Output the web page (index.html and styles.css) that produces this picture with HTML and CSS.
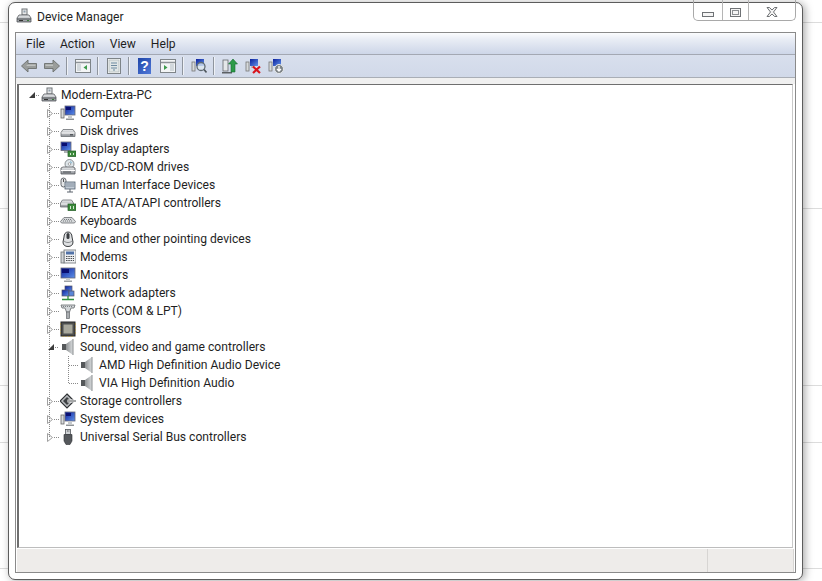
FILE: index.html
```html
<!DOCTYPE html>
<html lang="en">
<head>
<meta charset="utf-8">
<title>Device Manager</title>
<link rel="stylesheet" href="styles.css">
</head>
<body>
<svg class="sprites" width="0" height="0" aria-hidden="true">
  <defs>
    <linearGradient id="gm" x1="0" y1="0" x2="0" y2="1"><stop offset="0" stop-color="#eceef0"/><stop offset="1" stop-color="#8d9196"/></linearGradient>
    <linearGradient id="gb" x1="0" y1="0" x2="1" y2="1"><stop offset="0" stop-color="#0b1f9c"/><stop offset="1" stop-color="#5f92ea"/></linearGradient>
    <linearGradient id="gs" x1="0" y1="0" x2="1" y2="0"><stop offset="0" stop-color="#6d7072"/><stop offset="1" stop-color="#d9dcde"/></linearGradient>
    <symbol id="pc" viewBox="0 0 16 16">
      <rect x="6" y="1" width="5" height="6" fill="#e8e8e8" stroke="#6f7478"/><rect x="7.5" y="2.5" width="2" height="2" fill="#8fa0ae"/>
      <path d="M1 10 3 7h10l2 3v4H1z" fill="url(#gm)" stroke="#55595d" stroke-width=".8"/><path d="M1 11h14" stroke="#44484c"/><rect x="3" y="12" width="4" height="1" fill="#333"/><rect x="11" y="12" width="2" height="1" fill="#3b7a3b"/>
    </symbol>
    <symbol id="computer" viewBox="0 0 16 16">
      <rect x="1" y="4" width="3" height="9" fill="#d7dadc" stroke="#666" stroke-width=".8"/>
      <rect x="5" y="1" width="10" height="9" fill="url(#gb)" stroke="#667" stroke-width=".8"/><path d="M6 2h5v3H6z" fill="#0a0f72"/>
      <path d="M8 10h4v3H8z" fill="#c7cacc"/><path d="M6 13.500h8v1.500H6z" fill="#8e9295"/>
    </symbol>
    <symbol id="disk" viewBox="0 0 16 16">
      <path d="M1 9.500 3 6.500h10l2 3v4H1z" fill="url(#gm)" stroke="#6c7074" stroke-width=".8"/><path d="M1.500 10h13" stroke="#fff"/><rect x="10" y="11" width="3" height="1.500" fill="#55595d"/>
    </symbol>
    <symbol id="display" viewBox="0 0 16 16">
      <rect x="1" y="1" width="10" height="8.500" fill="url(#gb)" stroke="#667" stroke-width=".8"/><path d="M2 2h5v3H2z" fill="#0a0f72"/>
      <path d="M4 10h5v2H4z" fill="#aeb2b5"/><rect x="8" y="10" width="8" height="5.500" fill="#3d8a3d" stroke="#1f5a22" stroke-width=".7"/><path d="M10 12h1v2h-1zm3 0h1v2h-1z" fill="#d2e8d0"/>
    </symbol>
    <symbol id="dvd" viewBox="0 0 16 16">
      <circle cx="9.500" cy="5" r="4.500" fill="#dfe6ea" stroke="#70767a" stroke-width=".8"/><circle cx="9.500" cy="5" r="1.300" fill="#fff" stroke="#777" stroke-width=".6"/><path d="M10 1.500 12.500 4l-2 .5z" fill="#8fbcd4"/>
      <path d="M1 9 3 8h10l2 1v6H1z" fill="url(#gm)" stroke="#55595d" stroke-width=".8"/><path d="M1 11.500h14" stroke="#fff"/><rect x="3" y="12.500" width="8" height="1" fill="#4d5154"/>
    </symbol>
    <symbol id="hid" viewBox="0 0 16 16">
      <rect x="1" y="1" width="5" height="9" rx="2.500" fill="#e4e6e8" stroke="#55595d" stroke-width=".9"/><path d="M3.500 2v3" stroke="#555"/>
      <rect x="5" y="5" width="10" height="7" fill="#c3ccd6" stroke="#50606e" stroke-width=".8"/><path d="M6.500 7h7M6.500 9h7" stroke="#405364" stroke-dasharray="1 1"/><path d="M10 12v3M7 15h6" stroke="#58616b"/>
    </symbol>
    <symbol id="ide" viewBox="0 0 16 16">
      <path d="M0.500 8 2.500 5h9l2 3v4H.5z" fill="url(#gm)" stroke="#6c7074" stroke-width=".8"/><path d="M1 9h12" stroke="#fff"/>
      <rect x="8" y="9" width="8" height="6.500" fill="#3d8a3d" stroke="#1f5a22" stroke-width=".7"/><path d="M10 11h1v3h-1zm3 0h1v3h-1z" fill="#d2e8d0"/>
    </symbol>
    <symbol id="keyboard" viewBox="0 0 16 16">
      <path d="M.5 8.500 4 4.500h8l3.500 4-1 1.500H1.500z" fill="#d5d8da" stroke="#6c7074" stroke-width=".8"/><path d="M4 6.500h8M3 8h10" stroke="#777b7f" stroke-dasharray="1 1"/>
    </symbol>
    <symbol id="mouse" viewBox="0 0 16 16">
      <path d="M4 6c0-3 1.500-5 4-5s4 2 4 5l1 5c0 3-2 4.500-5 4.500S3 14 3 11z" fill="#dfe1e3" stroke="#3a3d40"/><rect x="6.500" y="2" width="3" height="6" rx="1.500" fill="#3a3d40"/><path d="M4 10c2 2 6 2 8 0" stroke="#8a8d90" fill="none"/>
    </symbol>
    <symbol id="modem" viewBox="0 0 16 16">
      <rect x="4" y="1" width="12" height="13" fill="#eef0f2" stroke="#6d7276" stroke-width=".8"/><rect x="1" y="3" width="3" height="11" fill="#d1d4d6" stroke="#6d7276" stroke-width=".8"/>
      <rect x="6" y="2.500" width="8" height="3" fill="#5172a8"/><path d="M6 7.500h8M6 9.500h8M6 11.500h8" stroke="#4a4e52" stroke-dasharray="1.500 .8"/>
    </symbol>
    <symbol id="monitor" viewBox="0 0 16 16">
      <rect x="1" y="1" width="14" height="10" fill="url(#gb)" stroke="#667" stroke-width=".8"/><path d="M2 2h7v4H2z" fill="#0a0f72"/>
      <path d="M6 11h4v2H6z" fill="#c7cacc"/><path d="M4 13.500h8V15H4z" fill="#9ea2a5"/>
    </symbol>
    <symbol id="network" viewBox="0 0 16 16">
      <rect x="5" y="1" width="7" height="6" fill="url(#gb)" stroke="#556" stroke-width=".7"/><rect x="2" y="5" width="7" height="6" fill="url(#gb)" stroke="#556" stroke-width=".7"/><rect x="9" y="6" width="5" height="5" fill="#5a86d8" stroke="#556" stroke-width=".7"/>
      <path d="M8 11v3M2 14.500h12" stroke="#2f8f3f" stroke-width="1.300"/>
    </symbol>
    <symbol id="ports" viewBox="0 0 16 16">
      <path d="M1 2h14l-1 3h-3L9.500 9h-3L5 5H2z" fill="#d2d6d9" stroke="#686c70" stroke-width=".8"/><path d="M3 3.500h10" stroke="#7e8286" stroke-dasharray="1 1"/>
      <rect x="6.500" y="9" width="3" height="6.500" fill="#a9adb0" stroke="#62666a" stroke-width=".7"/>
    </symbol>
    <symbol id="cpu" viewBox="0 0 16 16">
      <rect x="1" y="1" width="14" height="14" fill="#4e5050" stroke="#262626"/><rect x="3.500" y="3.500" width="9" height="9" fill="#a8a89c"/>
      <path d="M0 3h1M0 6h1M0 9h1M0 12h1M15 3h1M15 6h1M15 9h1M15 12h1M3 15v1M6 15v1M9 15v1M12 15v1" stroke="#b8942e"/>
    </symbol>
    <symbol id="sound" viewBox="0 0 16 16">
      <path d="M13 0 6 5H3v6h3l7 5z" fill="url(#gs)"/><path d="M2 5h4v6H2z" fill="#55585a"/><path d="M13 0v16" stroke="#8a8e90"/>
    </symbol>
    <symbol id="storage" viewBox="0 0 16 16">
      <path d="M7 1 14 8l-7 7-7-7z" fill="#b9bcbf" stroke="#2f3235" stroke-width="1.200"/><path d="M7 4 11 8l-4 4-4-4z" fill="#3e4144"/><path d="M7.500 6.500H16v3H7.500z" fill="#fff"/><path d="M8 8h8" stroke="#4b4e51"/>
    </symbol>
    <symbol id="usb" viewBox="0 0 16 16">
      <rect x="5.500" y="0.500" width="5" height="5" fill="#d0d3d6" stroke="#54585c" stroke-width=".8"/><path d="M7 2h.8M8.500 2h.8" stroke="#3c3f42"/>
      <path d="M4 5.500h8V12l-2 3.500H6L4 12z" fill="#55585c" stroke="#303336" stroke-width=".6"/>
    </symbol>
    <symbol id="tb-back" viewBox="0 0 16 16"><path d="M.5 8 7 2v3.500h8.500v5H7V14z" fill="#9a9d9b" stroke="#6c706e" stroke-width=".9"/><path d="M7 6.500h7.500v1.500H5z" fill="#bfc2c0"/></symbol>
    <symbol id="tb-forward" viewBox="0 0 16 16"><path d="M15.500 8 9 2v3.500H.5v5H9V14z" fill="#9a9d9b" stroke="#6c706e" stroke-width=".9"/><path d="M1.500 6.500H9V8H1.500z" fill="#bfc2c0"/></symbol>
    <symbol id="tb-pane" viewBox="0 0 16 16"><rect x=".5" y="1.500" width="15" height="13" fill="#f3f5f6" stroke="#7e8488"/><path d="M1 4.500h14" stroke="#8d9397" stroke-width="1.500"/><rect x="2" y="6" width="4" height="7" fill="#d2d8dc"/><path d="M12 7v5L8.500 9.500z" fill="#3d9a4b"/></symbol>
    <symbol id="tb-props" viewBox="0 0 16 16"><rect x="1.500" y=".5" width="13" height="15" fill="#f7f8f8" stroke="#7e8488"/><rect x="3" y="2" width="10" height="12" fill="#e0e6e6" stroke="#a6aeb0" stroke-width=".6"/><path d="M5 5h6M5 7.500h6M5 10h6M7 12h2" stroke="#6d8aa0"/></symbol>
    <symbol id="tb-view" viewBox="0 0 16 16"><rect x=".5" y="1.500" width="15" height="13" fill="#f3f5f6" stroke="#7e8488"/><path d="M1 4.500h14" stroke="#8d9397" stroke-width="1.500"/><rect x="10" y="6" width="4" height="7" fill="#d2d8dc"/><path d="M4 7v5l3.500-2.500z" fill="#3d9a4b"/></symbol>
    <symbol id="tb-scan" viewBox="0 0 16 16"><rect x="1" y="4" width="3" height="9" fill="#d7dadc" stroke="#777" stroke-width=".8"/><rect x="5" y="1" width="8" height="7" fill="url(#gb)"/><circle cx="10" cy="8.500" r="4" fill="#dfeaf0" fill-opacity=".7" stroke="#5f6a72" stroke-width="1.300"/><path d="m13 11.500 2.500 3" stroke="#4e565c" stroke-width="1.600"/></symbol>
    <symbol id="tb-update" viewBox="0 0 16 16"><rect x="1" y="2" width="5" height="11" fill="#e4e7e9" stroke="#666a6e" stroke-width=".8"/><path d="M0 14h10v1.500H0z" fill="#5c6064"/><path d="M11 1 15.500 6H13v8H9V6H6.500z" fill="#2c9a48" stroke="#1a6b30" stroke-width=".6"/></symbol>
    <symbol id="tb-remove" viewBox="0 0 16 16"><rect x="1" y="4" width="3" height="9" fill="#d7dadc" stroke="#777" stroke-width=".8"/><rect x="5" y="1" width="8" height="7" fill="url(#gb)"/><path d="M6 8h3v2H6z" fill="#b8bcbf"/><path d="m8 8.500 7 6.500m0-6.500L8 15" stroke="#d8141c" stroke-width="2.200"/></symbol>
    <symbol id="tb-add" viewBox="0 0 16 16"><rect x="1" y="4" width="3" height="9" fill="#d7dadc" stroke="#777" stroke-width=".8"/><rect x="5" y="1" width="8" height="7" fill="url(#gb)"/><circle cx="11" cy="11" r="4.500" fill="#7d8387" stroke="#e8eaec"/><path d="M11 8v5m-2-2 2 2 2-2" stroke="#fff" stroke-width="1.300" fill="none"/></symbol>
    <symbol id="exp-closed" viewBox="0 0 19 18"><path d="M6.500 5.500v8l5-4z" fill="#fff" stroke="#a0a0a0"/><path d="M13 9.500h5" stroke="#8a8a8a" stroke-dasharray="1 1"/></symbol>
    <symbol id="exp-open" viewBox="0 0 19 18"><path d="M7 12h6V6z" fill="#3c3c3c"/><path d="M14 9.500h4" stroke="#8a8a8a" stroke-dasharray="1 1"/></symbol>
    <symbol id="leaf-link" viewBox="0 0 19 18"><path d="M9 9.500h10" stroke="#8a8a8a" stroke-dasharray="1 1"/></symbol>
  </defs>
</svg>

<main class="window">
  <header class="titlebar">
    <svg class="icon title-icon"><use href="#pc"/></svg>
    <span class="title-text">Device Manager</span>
    <div class="caption">
      <span class="cap cap-min"><i class="glyph-min"></i></span>
      <span class="cap cap-max"><i class="glyph-max"></i></span>
      <span class="cap cap-close">
        <svg class="glyph-close" viewBox="0 0 12 10"><path d="M1 .5h2.500L6 3 8.500.5H11L7.500 5 11 9.500H8.500L6 7 3.500 9.500H1L4.500 5z" fill="#f2f2f2" stroke="#6f7275"/></svg>
      </span>
    </div>
  </header>

  <div class="frame">
    <nav class="menubar">
      <span class="menu-item menu-file">File</span>
      <span class="menu-item menu-action">Action</span>
      <span class="menu-item menu-view">View</span>
      <span class="menu-item menu-help">Help</span>
    </nav>

    <div class="toolbar">
      <svg class="icon"><use href="#tb-back"/></svg>
      <svg class="icon gap-7"><use href="#tb-forward"/></svg>
      <i class="sep"></i>
      <svg class="icon"><use href="#tb-pane"/></svg>
      <i class="sep"></i>
      <svg class="icon"><use href="#tb-props"/></svg>
      <i class="sep"></i>
      <span class="help-btn">?</span>
      <svg class="icon gap-9"><use href="#tb-view"/></svg>
      <i class="sep"></i>
      <svg class="icon"><use href="#tb-scan"/></svg>
      <i class="sep"></i>
      <svg class="icon"><use href="#tb-update"/></svg>
      <svg class="icon gap-7"><use href="#tb-remove"/></svg>
      <svg class="icon gap-7"><use href="#tb-add"/></svg>
    </div>

    <div class="strip"></div>

    <section class="tree">
      <div class="row">
        <svg class="exp"><use href="#exp-open"/></svg>
        <svg class="icon"><use href="#pc"/></svg>
        <span class="label">Modern-Extra-PC</span>
      </div>
      <ul class="branch">
        <li><div class="row"><svg class="exp"><use href="#exp-closed"/></svg><svg class="icon"><use href="#computer"/></svg><span class="label">Computer</span></div></li>
        <li><div class="row"><svg class="exp"><use href="#exp-closed"/></svg><svg class="icon"><use href="#disk"/></svg><span class="label">Disk drives</span></div></li>
        <li><div class="row"><svg class="exp"><use href="#exp-closed"/></svg><svg class="icon"><use href="#display"/></svg><span class="label">Display adapters</span></div></li>
        <li><div class="row"><svg class="exp"><use href="#exp-closed"/></svg><svg class="icon"><use href="#dvd"/></svg><span class="label">DVD/CD-ROM drives</span></div></li>
        <li><div class="row"><svg class="exp"><use href="#exp-closed"/></svg><svg class="icon"><use href="#hid"/></svg><span class="label">Human Interface Devices</span></div></li>
        <li><div class="row"><svg class="exp"><use href="#exp-closed"/></svg><svg class="icon"><use href="#ide"/></svg><span class="label">IDE ATA/ATAPI controllers</span></div></li>
        <li><div class="row"><svg class="exp"><use href="#exp-closed"/></svg><svg class="icon"><use href="#keyboard"/></svg><span class="label">Keyboards</span></div></li>
        <li><div class="row"><svg class="exp"><use href="#exp-closed"/></svg><svg class="icon"><use href="#mouse"/></svg><span class="label">Mice and other pointing devices</span></div></li>
        <li><div class="row"><svg class="exp"><use href="#exp-closed"/></svg><svg class="icon"><use href="#modem"/></svg><span class="label">Modems</span></div></li>
        <li><div class="row"><svg class="exp"><use href="#exp-closed"/></svg><svg class="icon"><use href="#monitor"/></svg><span class="label">Monitors</span></div></li>
        <li><div class="row"><svg class="exp"><use href="#exp-closed"/></svg><svg class="icon"><use href="#network"/></svg><span class="label">Network adapters</span></div></li>
        <li><div class="row"><svg class="exp"><use href="#exp-closed"/></svg><svg class="icon"><use href="#ports"/></svg><span class="label">Ports (COM &amp; LPT)</span></div></li>
        <li><div class="row"><svg class="exp"><use href="#exp-closed"/></svg><svg class="icon"><use href="#cpu"/></svg><span class="label">Processors</span></div></li>
        <li>
          <div class="row"><svg class="exp"><use href="#exp-open"/></svg><svg class="icon"><use href="#sound"/></svg><span class="label">Sound, video and game controllers</span></div>
          <ul class="branch sub">
            <li><div class="row"><svg class="exp"><use href="#leaf-link"/></svg><svg class="icon"><use href="#sound"/></svg><span class="label">AMD High Definition Audio Device</span></div></li>
            <li><div class="row"><svg class="exp"><use href="#leaf-link"/></svg><svg class="icon"><use href="#sound"/></svg><span class="label">VIA High Definition Audio</span></div></li>
          </ul>
        </li>
        <li><div class="row"><svg class="exp"><use href="#exp-closed"/></svg><svg class="icon"><use href="#storage"/></svg><span class="label">Storage controllers</span></div></li>
        <li><div class="row"><svg class="exp"><use href="#exp-closed"/></svg><svg class="icon"><use href="#computer"/></svg><span class="label">System devices</span></div></li>
        <li><div class="row"><svg class="exp"><use href="#exp-closed"/></svg><svg class="icon"><use href="#usb"/></svg><span class="label">Universal Serial Bus controllers</span></div></li>
      </ul>
    </section>

    <footer class="statusbar">
      <span class="status-main"></span>
      <span class="status-side"></span>
    </footer>
  </div>
</main>
</body>
</html>
```

FILE: styles.css
```css
* { box-sizing: border-box; }

html, body { margin: 0; height: 100%; }

body {
  width: 822px;
  height: 581px;
  overflow: hidden;
  position: relative;
  font-family: Roboto, "Noto Sans", sans-serif;
  font-size: 12.1px;
  color: #1f1f1f;
  background-color: #fff;
  background-image:
    linear-gradient(#dcdcdc, #dcdcdc),
    linear-gradient(#dcdcdc, #dcdcdc),
    linear-gradient(#dcdcdc, #dcdcdc),
    linear-gradient(#dcdcdc, #dcdcdc),
    linear-gradient(#dcdcdc, #dcdcdc);
  background-size: 100% 1px;
  background-repeat: no-repeat;
  background-position: 0 22px, 0 208px, 0 385px, 0 442px, 0 568px;
}

.sprites { position: absolute; }

.window {
  position: absolute;
  left: 8px;
  top: 2px;
  width: 795px;
  height: 578px;
  padding: 0 6px;
  display: flex;
  flex-direction: column;
  background: #fff;
  border: 1px solid #5c5c5c;
  border-radius: 7px;
  box-shadow: 2px 1px 9px rgba(0, 0, 0, .35);
}

.icon { width: 16px; height: 16px; flex: none; display: block; }

.titlebar {
  height: 29px;
  flex: none;
  display: flex;
  align-items: flex-start;
}

.title-icon { margin: 5px 0 0 1px; }

.title-text {
  margin: 4px 0 0 5px;
  line-height: 20px;
}

.caption {
  margin: -3px 0 0 auto;
  height: 21px;
  display: flex;
  border: 1px solid #a9a9a9;
  border-top: 0;
  border-radius: 0 0 5px 5px;
}

.cap {
  display: flex;
  justify-content: center;
  height: 100%;
  border-left: 1px solid #b5b5b5;
}
.cap:first-child { border-left: 0; }
.cap-min { width: 28px; }
.cap-max { width: 26px; }
.cap-close { width: 47px; }

.glyph-min {
  display: block;
  width: 12px;
  height: 5px;
  margin-top: 12px;
  background: #f5f5f5;
  border: 1px solid #6f7275;
}
.glyph-max {
  display: block;
  width: 11px;
  height: 9px;
  margin-top: 8px;
  background: #f5f5f5;
  border: 1px solid #6f7275;
  box-shadow: inset 0 0 0 1px #f5f5f5, inset 0 0 0 2px #8b8e91;
}
.glyph-close { width: 12px; height: 10px; margin-top: 7px; }

.frame {
  flex: none;
  height: 541px;
  display: flex;
  flex-direction: column;
  border: 1px solid #8a8a8a;
  background: #fff;
}

.menubar {
  height: 22px;
  flex: none;
  display: flex;
  align-items: center;
  background: linear-gradient(#fbfcfe, #e9edf5 30%, #cdd6e8);
  border-bottom: 1px solid #a3a8b3;
}
.menu-item { line-height: 20px; }
.menu-file { margin-left: 10px; }
.menu-action { margin-left: 15px; }
.menu-view { margin-left: 15px; }
.menu-help { margin-left: 15px; }

.toolbar {
  height: 23px;
  flex: none;
  display: flex;
  align-items: center;
  padding-left: 5px;
  background: linear-gradient(#d8dfed, #d1d9e9);
  border-bottom: 1px solid #a9aeb6;
}
.gap-7 { margin-left: 7px; }
.gap-9 { margin-left: 9px; }
.sep {
  display: block;
  width: 1px;
  height: 18px;
  margin: 0 8px 0 6px;
  background: #8f959e;
  box-shadow: 1px 0 0 #eef1f6;
}
.help-btn {
  width: 13px;
  height: 16px;
  margin-left: 1px;
  flex: none;
  background: linear-gradient(135deg, #1f45a8, #4f78d8);
  color: #fff;
  font-family: "Liberation Sans", sans-serif;
  font-size: 14px;
  font-weight: 700;
  line-height: 16px;
  text-align: center;
}

.strip {
  height: 6px;
  flex: none;
  background: #f0f0f0;
}

.tree {
  flex: 1;
  margin: 0 2px 0 1px;
  padding: 1px 0 0 3px;
  background: #fff;
  border-top: 1px solid #6f6f6f;
  border-left: 2px solid #6f6f6f;
  border-right: 1px solid #c9c9c9;
  border-bottom: 1px solid #bdbdbd;
}

.row {
  height: 18px;
  display: flex;
  align-items: center;
}

.exp { width: 19px; height: 18px; flex: none; display: block; }

.label {
  margin-left: 4px;
  line-height: 18px;
  white-space: nowrap;
}

ul.branch {
  position: relative;
  list-style: none;
  margin: 0 0 0 19px;
  padding: 0;
}
ul.branch::before {
  content: "";
  position: absolute;
  left: 8px;
  top: 0;
  bottom: 9px;
  border-left: 1px dotted #8a8a8a;
}

.statusbar {
  height: 23px;
  flex: none;
  margin: 1px 1px 0;
  display: flex;
  background: #eeecea;
}
.status-main { flex: 1; border-right: 1px solid #d7d5d3; }
.status-side { width: 86px; border-right: 1px solid #d7d5d3; }
```
